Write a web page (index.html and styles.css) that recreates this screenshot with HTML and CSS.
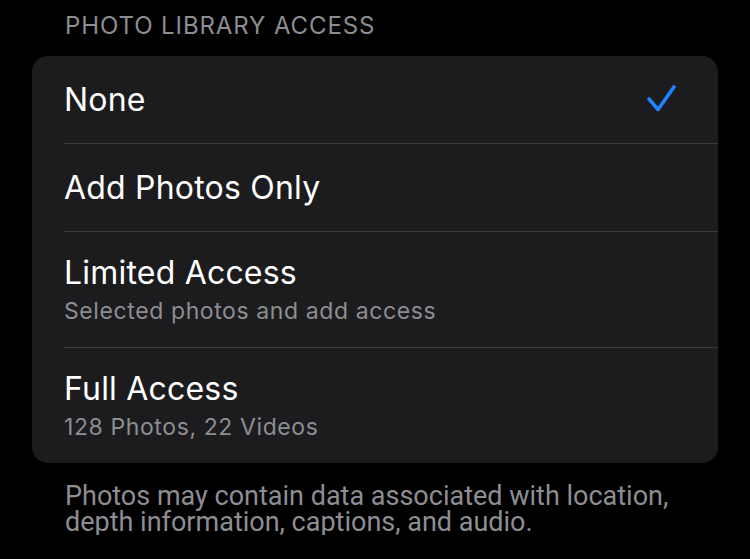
FILE: index.html
```html
<!DOCTYPE html>
<html lang="en">
<head>
    <meta charset="UTF-8">
    <meta name="viewport" content="width=device-width, initial-scale=1.0">
    <title>Photo Library Access</title>
    <link rel="stylesheet" href="styles.css">
</head>
<body>
    <div class="section">
        <div class="section-title">PHOTO LIBRARY ACCESS</div>
        <div class="group">
            <div class="cell short">
                <div class="cell-text">
                    <div class="cell-label">None</div>
                </div>
                <svg class="check" width="32" height="32" viewBox="0 0 32 32">
                    <path d="M3 15 L12 25.5 L28 3" fill="none" stroke="#1f84ff" stroke-width="3.6" stroke-linecap="round" stroke-linejoin="round"/>
                </svg>
            </div>
            <div class="cell short">
                <div class="cell-text">
                    <div class="cell-label">Add Photos Only</div>
                </div>
            </div>
            <div class="cell tall">
                <div class="cell-text">
                    <div class="cell-label">Limited Access</div>
                    <div class="cell-sub">Selected photos and add access</div>
                </div>
            </div>
            <div class="cell tall">
                <div class="cell-text">
                    <div class="cell-label">Full Access</div>
                    <div class="cell-sub">128 Photos, 22 Videos</div>
                </div>
            </div>
        </div>
        <div class="section-footer">Photos may contain data associated with location, depth information, captions, and audio.</div>
    </div>
</body>
</html>
```

FILE: styles.css
```css
body {
    font-family: Inter, "Liberation Sans", sans-serif;
    background-color: #000000;
    color: #ffffff;
    margin: 0;
}
.section {
    padding: 10px 32px 0 32px;
}
.section-title {
    color: #8d8d93;
    font-size: 24px;
    line-height: 32px;
    letter-spacing: 0.9px;
    padding: 0 0 14px 33px;
}
.group {
    background-color: #1c1c1e;
    border-radius: 16px;
    overflow: hidden;
}
.cell {
    display: flex;
    align-items: center;
    justify-content: space-between;
    margin-left: 32px;
    padding-right: 40px;
    border-bottom: 1px solid #3a3a3c;
}
.cell:last-child {
    border-bottom: none;
}
.cell.short {
    height: 87px;
}
.cell.tall {
    height: 115px;
}
.cell-label {
    font-size: 32px;
    line-height: 38px;
    letter-spacing: 0.2px;
}
.cell-sub {
    color: #8d8d93;
    font-size: 23px;
    line-height: 30px;
    letter-spacing: 0.6px;
    margin-top: 4px;
}
.check {
    display: block;
}
.section-footer {
    font-family: Roboto, "Liberation Sans", sans-serif;
    color: #8d8d93;
    font-size: 27px;
    line-height: 26px;
    padding: 20px 40px 0 33px;
}
```
